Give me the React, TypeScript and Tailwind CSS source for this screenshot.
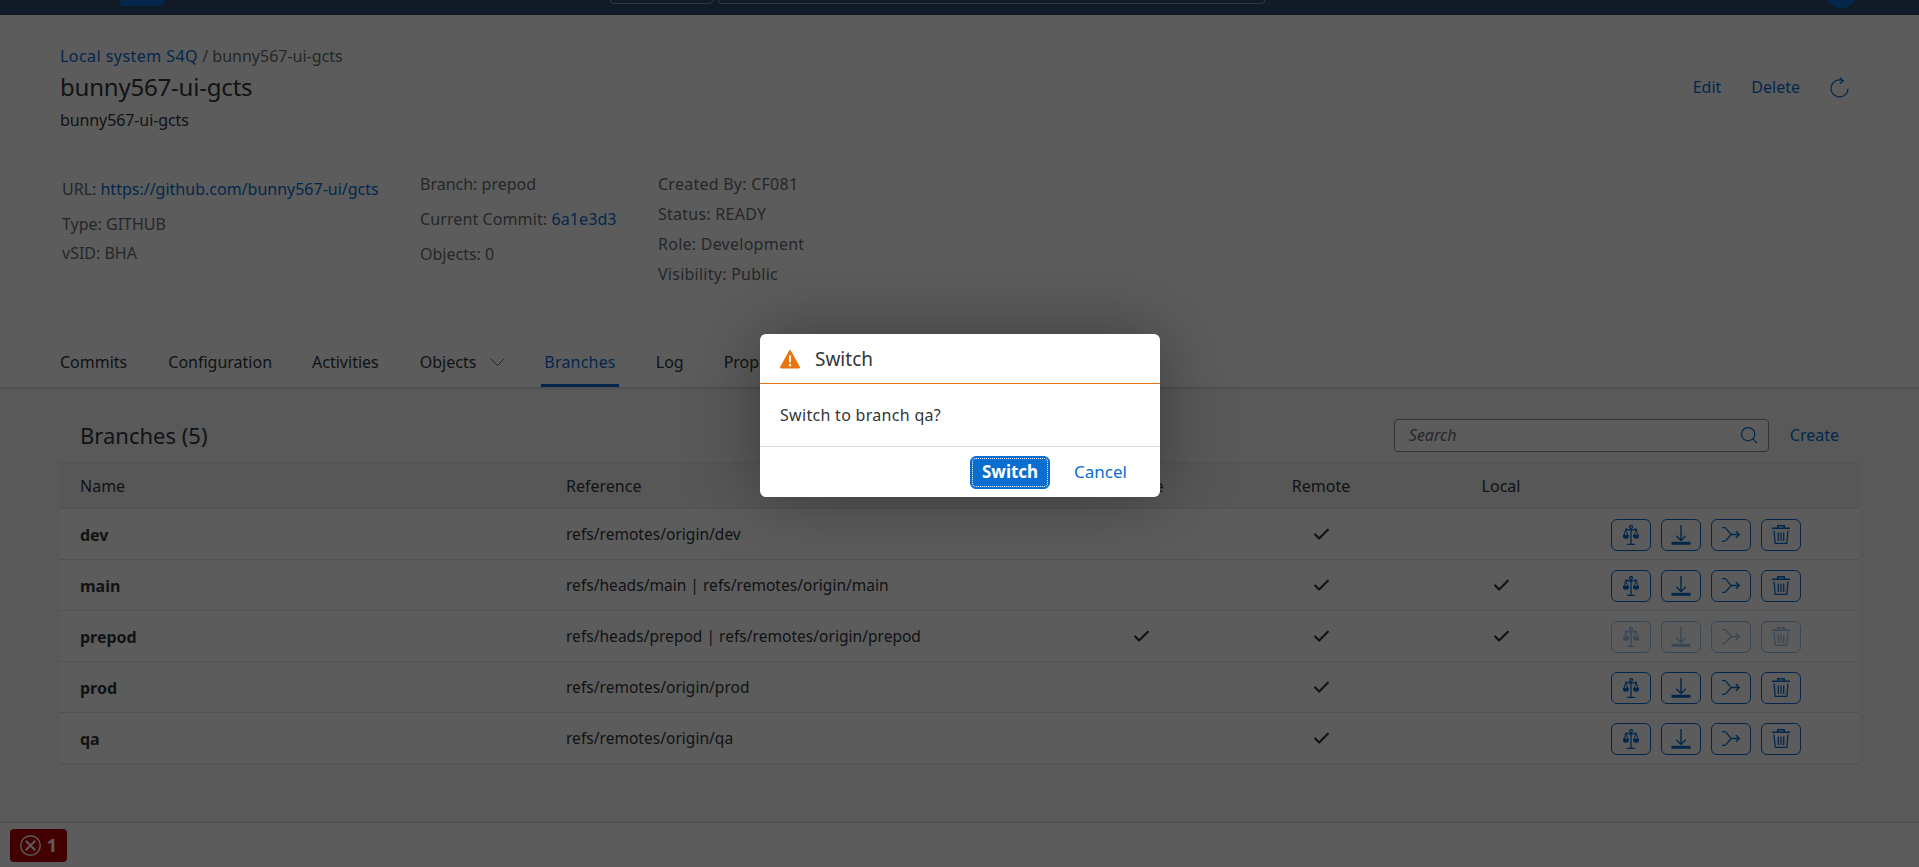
import React from "react";
import { Check, Search } from "lucide-react";

const font = "font-['Noto_Sans','Liberation_Sans',sans-serif]";

const branches = [
  { name: "dev", ref: "refs/remotes/origin/dev", active: false, remote: true, local: false },
  { name: "main", ref: "refs/heads/main | refs/remotes/origin/main", active: false, remote: true, local: true },
  { name: "prepod", ref: "refs/heads/prepod | refs/remotes/origin/prepod", active: true, remote: true, local: true },
  { name: "prod", ref: "refs/remotes/origin/prod", active: false, remote: true, local: false },
  { name: "qa", ref: "refs/remotes/origin/qa", active: false, remote: true, local: false },
];

function ScaleIcon() {
  return (
    <svg width="16" height="20" viewBox="0 0 16 20" fill="none" stroke="currentColor" strokeWidth="1.300">
      <circle cx="8" cy="2" r="1.500" />
      <path d="M8 3.500V19M4 19.300h8M2.500 4l5.500 1.300L13.500 4" />
      <path d="M2.800 4 1 10.500M2.800 4l1.900 6.500M13.200 4l-1.900 6.500M13.200 4 15 10.500" strokeWidth="1" />
      <path d="M.3 10.500h5.100c-.2 3.600-4.900 3.600-5.100 0ZM10.600 10.500h5.100c-.2 3.600-4.900 3.600-5.100 0Z" fill="currentColor" />
    </svg>
  );
}

function DownloadIcon() {
  return (
    <svg width="20" height="20" viewBox="0 0 20 20" fill="none" stroke="currentColor" strokeWidth="1.400">
      <path d="M10 0v15.500M5.300 10.800 10 15.500l4.700-4.700" />
      <path d="M.5 18.300h19" strokeWidth="3" />
    </svg>
  );
}

function MergeIcon() {
  return (
    <svg width="18" height="15" viewBox="0 0 18 15" fill="none" stroke="currentColor" strokeWidth="1.300">
      <path d="M0 .7h2.500c2.500 0 3 3.800 7 6.800-4 3-4.500 6.800-7 6.800H0" />
      <path d="M9.500 7.500H17.300M13.800 4l3.500 3.500-3.500 3.500" />
    </svg>
  );
}

function TrashIcon() {
  return (
    <svg width="18" height="19" viewBox="0 0 18 19" fill="none" stroke="currentColor" strokeWidth="1.300">
      <path d="M0 3.200h18M5.800 3V.8h6.400V3" strokeWidth="1.600" />
      <path d="M2 5.500 3.200 18.300h11.600L16 5.500M6.300 7.500v8.500M9 7.500v8.500M11.700 7.500v8.500" />
    </svg>
  );
}

function ActionButton({ children, disabled }: { children: React.ReactNode; disabled: boolean }) {
  return (
    <button className={`flex h-8 w-10 items-center justify-center rounded-md border border-[#0a6ed1] bg-white text-[#0a6ed1] ${disabled ? "opacity-40" : ""}`}>
      {children}
    </button>
  );
}

function TabItem({ label, selected }: { label: string; selected?: boolean }) {
  return (
    <div className={`flex h-[47px] items-center border-b-[3px] ${selected ? "border-[#0a6ed1] text-[#0a6ed1] -mx-[3px] px-[3px] tracking-[0.2px]" : "border-transparent text-[#32363a]"}`}>
      {label}
    </div>
  );
}

function InfoLine({ children, className = "" }: { children: React.ReactNode; className?: string }) {
  return <div className={`whitespace-nowrap ${className}`}>{children}</div>;
}

export default function App() {
  return (
    <div className={`relative flex h-[867px] w-full flex-col overflow-hidden bg-[#f7f7f7] text-[16px] text-[#32363a] ${font}`}>
      {/* Shell bar, scrolled almost out of view */}
      <div className="flex h-[15px] shrink-0 items-start overflow-hidden bg-[#2e4b6c] pl-[120px]">
        <div className="h-[6px] w-[45px] bg-[#0a6ed1] [clip-path:polygon(0_0,100%_0,90%_100%,0_100%)]" />
        <div className="ml-[445px] h-[4px] w-[103px] rounded-b border border-t-0 border-[#8696a9]" />
        <div className="ml-[5px] h-[4px] w-[547px] rounded-b border border-t-0 border-[#8696a9]" />
        <div className="ml-[560px] -mt-6 h-8 w-8 rounded-full bg-[#0a6ed1]" />
      </div>

      {/* Object header */}
      <div className="flex h-[373px] shrink-0 flex-col border-b border-[#d9d9d9] bg-white px-[60px] shadow-sm">
        <div className="flex items-start justify-between">
          <div className="pt-[29px]">
            <div className="text-[#6a6d70]">
              <span className="tracking-[0.45px] text-[#0a6ed1]">Local system S4Q</span> / bunny567-ui-gcts
            </div>
            <div className="mt-[3px] text-[24px] leading-8 tracking-[-0.2px] text-[#32363a]">bunny567-ui-gcts</div>
            <div className="mt-[5px] tracking-[-0.1px]">bunny567-ui-gcts</div>
          </div>
          <div className="mr-[10px] flex items-center gap-[30px] pt-[60px] text-[#0a6ed1]">
            <span>Edit</span>
            <span>Delete</span>
            <svg width="19" height="21" viewBox="0 0 19 21" fill="none" stroke="currentColor" strokeWidth="1.200">
              <path d="M13 3.700A8.500 8.500 0 1 0 18 11.500M9.800 .7l3.500 3-3.500 3" />
            </svg>
          </div>
        </div>

        <div className="mt-[40px] flex text-[#6a6d70]">
          <div className="ml-[2px] w-[358px] pt-[5px]">
            <InfoLine className="h-[35px]">
              URL: <span className="text-[#0a6ed1]">https://github.com/bunny567-ui/gcts</span>
            </InfoLine>
            <InfoLine className="h-[29px]">Type: GITHUB</InfoLine>
            <InfoLine>vSID: BHA</InfoLine>
          </div>
          <div className="w-[238px]">
            <InfoLine className="h-[35px]">Branch: prepod</InfoLine>
            <InfoLine className="h-[35px] tracking-[0.1px]">
              Current Commit: <span className="text-[#0a6ed1]">6a1e3d3</span>
            </InfoLine>
            <InfoLine>Objects: 0</InfoLine>
          </div>
          <div className="tracking-[0.25px]">
            <InfoLine className="h-[30px]">Created By: CF081</InfoLine>
            <InfoLine className="h-[30px]">Status: READY</InfoLine>
            <InfoLine className="h-[30px]">Role: Development</InfoLine>
            <InfoLine>Visibility: Public</InfoLine>
          </div>
        </div>

        <div className="mt-auto flex items-center gap-10 text-[#6a6d70]">
          <TabItem label="Commits" />
          <div className="ml-[1px]"><TabItem label="Configuration" /></div>
          <TabItem label="Activities" />
          <div className="ml-[1px] -mr-[1px] flex items-center gap-[14px]">
            <TabItem label="Objects" />
            <svg width="15" height="9" viewBox="0 0 15 9" fill="none" stroke="currentColor" strokeWidth="1" className="-mt-[3px]">
              <path d="m.5.5 7 7 7-7" />
            </svg>
          </div>
          <TabItem label="Branches" selected />
          <TabItem label="Log" />
          <TabItem label="Properties" />
        </div>
      </div>

      {/* Branches table */}
      <div className="flex-1 px-[60px]">
        <div className="flex h-[74px] items-center justify-between pl-5 pr-5 pt-[20px]">
          <div className="text-[22px] text-[#32363a]">Branches (5)</div>
          <div className="flex items-center gap-[21px]">
            <div className="flex h-[33px] w-[375px] items-center justify-between rounded-sm border border-[#89919a] bg-white pl-[14px] pr-[9px]">
              <span className="italic text-[#6a6d70]">Search</span>
              <Search className="h-[20px] w-[20px] text-[#0a6ed1]" strokeWidth={1.5} />
            </div>
            <span className="text-[#0a6ed1]">Create</span>
          </div>
        </div>

        <div className="grid h-[47px] grid-cols-[486px_505px_180px_180px_180px_269px] items-center border-y border-[#e4e4e4] bg-[#f2f2f2] text-[#32363a]">
          <div className="pl-5">Name</div>
          <div className="pl-5">Reference</div>
          <div className="text-center">Active</div>
          <div className="text-center">Remote</div>
          <div className="text-center">Local</div>
          <div />
        </div>

        {branches.map((b) => (
          <div key={b.name} className="grid h-[51px] grid-cols-[486px_505px_180px_180px_180px_269px] items-center border-b border-[#e4e4e4] bg-white">
            <div className="pl-5 pt-[1px] font-bold">{b.name}</div>
            <div className="pl-5 pt-[1px] text-[15.5px] tracking-[0.03px]">{b.ref}</div>
            <div className="flex justify-center">{b.active && <Check className="h-[19px] w-[19px]" strokeWidth={2.800} />}</div>
            <div className="flex justify-center">{b.remote && <Check className="h-[19px] w-[19px]" strokeWidth={2.800} />}</div>
            <div className="flex justify-center">{b.local && <Check className="h-[19px] w-[19px]" strokeWidth={2.800} />}</div>
            <div className="flex gap-[10px] pl-5 pt-[1px]">
              <ActionButton disabled={b.active}><ScaleIcon /></ActionButton>
              <ActionButton disabled={b.active}><DownloadIcon /></ActionButton>
              <ActionButton disabled={b.active}><MergeIcon /></ActionButton>
              <ActionButton disabled={b.active}><TrashIcon /></ActionButton>
            </div>
          </div>
        ))}
      </div>

      {/* Message footer */}
      <div className="flex h-[45px] shrink-0 items-center border-t border-[#d9d9d9] bg-white pl-[10px]">
        <div className="flex h-[33px] w-[57px] items-center justify-center gap-[6px] rounded bg-[#bb0000] text-[18px] font-bold text-white">
          <svg width="21" height="21" viewBox="0 0 20 20" fill="none" stroke="currentColor" strokeWidth="1.300">
            <circle cx="10" cy="10" r="9.300" />
            <path d="m5.500 5.500 9 9m0-9-9 9" strokeWidth="1.800" />
          </svg>
          1
        </div>
      </div>

      {/* Modal overlay */}
      <div className="absolute inset-0 bg-black/[0.64]" />

      <div className="absolute left-[760px] top-[334px] w-[400px] rounded-md bg-white text-[#32363a] shadow-[0_0_70px_rgba(0,0,0,0.35)]">
        <div className="flex h-[50px] items-center gap-[15px] border-b border-[#e9730c] pl-5">
          <svg width="20" height="20" viewBox="0 0 20 20">
            <path d="M10 1 .5 18.200c-.2.500.1.800.6.800h17.800c.500 0 .800-.300.600-.800Z" fill="#e9730c" stroke="#e9730c" strokeLinejoin="round" />
            <path d="M8.900 6.500h2.200l-.3 7H9.200ZM8.900 15h2.200v2.200H8.900Z" fill="#fff" />
          </svg>
          <span className="pt-[1px] text-[19px]">Switch</span>
        </div>
        <div className="flex h-[63px] items-center border-b border-[#d9d9d9] pl-5 tracking-[0.3px]">Switch to branch qa?</div>
        <div className="flex h-[50px] items-center justify-end gap-6 pr-[33px]">
          <button className="h-[33px] w-20 rounded-md border border-[#0a6ed1] bg-[#0a6ed1] text-[17px] font-bold text-white outline-1 -outline-offset-3 outline-dotted outline-white">
            Switch
          </button>
          <span className="text-[17px] text-[#0a6ed1]">Cancel</span>
        </div>
      </div>
    </div>
  );
}
